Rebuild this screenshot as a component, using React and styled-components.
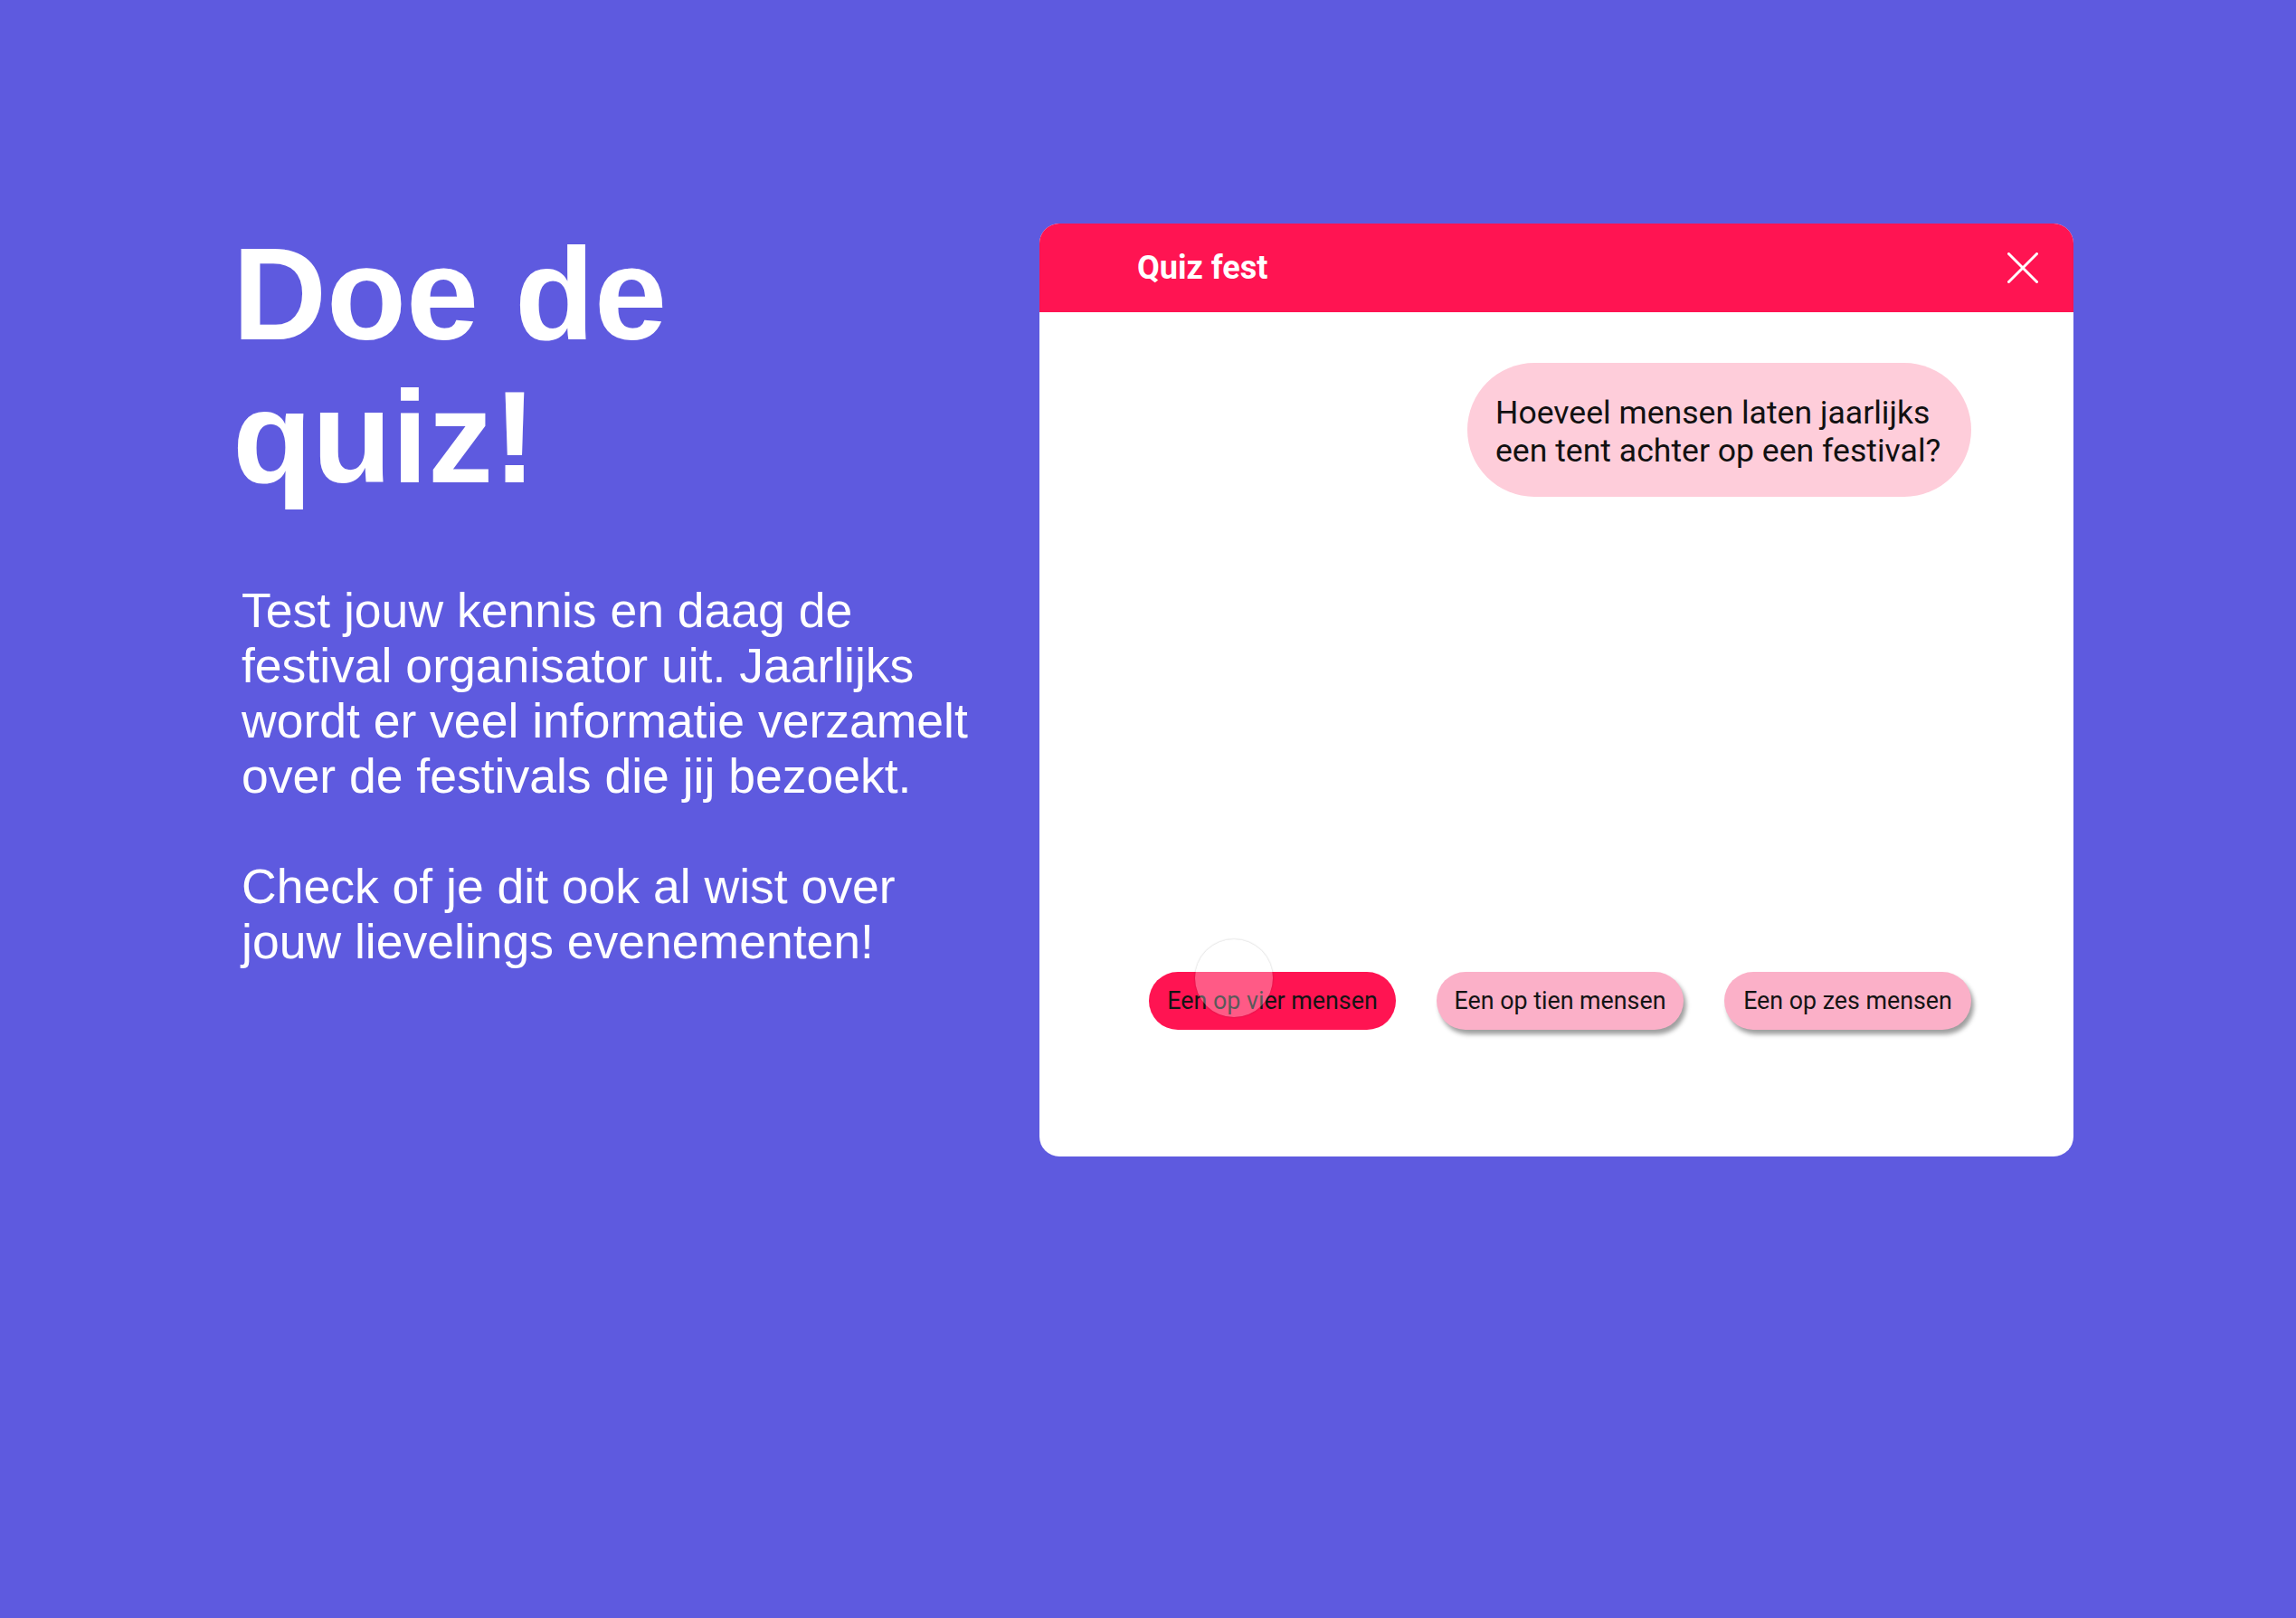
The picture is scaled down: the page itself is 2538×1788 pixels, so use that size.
import React from "react";
import styled, { createGlobalStyle } from "styled-components";

const GlobalStyle = createGlobalStyle`
  html, body {
    margin: 0;
    padding: 0;
    background: #5e5adf;
  }
  body {
    min-height: 1788px;
    font-family: "Liberation Sans", Arial, sans-serif;
  }
`;

const Page = styled.main`
  display: flex;
  align-items: flex-start;
  justify-content: space-between;
  padding: 247px 246px 0 257px;
  min-height: 1788px;
  box-sizing: border-box;
  background: #5e5adf;
`;

const Intro = styled.section`
  width: 830px;
  flex: 0 0 830px;
  color: #ffffff;
`;

const Title = styled.h1`
  margin: 0;
  font-family: "Liberation Sans", Arial, sans-serif;
  font-weight: 700;
  font-size: 144px;
  line-height: 158px;
  color: #ffffff;
`;

const Text = styled.p`
  margin: ${(p) => (p.$first ? "81px" : "61px")} 0 0;
  padding-left: 10px;
  width: 815px;
  font-family: "Liberation Sans", Arial, sans-serif;
  font-size: 53.5px;
  line-height: 61px;
  color: #ffffff;
`;

const Card = styled.section`
  flex: 0 0 1143px;
  width: 1143px;
  height: 1031px;
  background: #ffffff;
  border-radius: 22px;
  overflow: hidden;
  display: flex;
  flex-direction: column;
  font-family: Roboto, "Noto Sans", sans-serif;
`;

const Header = styled.header`
  height: 98px;
  flex: 0 0 98px;
  background: #ff1452;
  display: flex;
  align-items: center;
  justify-content: space-between;
  padding: 0 39px 0 108px;
  box-sizing: border-box;
`;

const HeaderTitle = styled.h2`
  margin: 0;
  font-family: Roboto, sans-serif;
  font-weight: 700;
  font-size: 36px;
  color: #ffffff;
`;

const CloseButton = styled.button`
  width: 34px;
  height: 34px;
  padding: 0;
  border: 0;
  background: transparent;
  display: flex;
  cursor: pointer;
`;

const Body = styled.div`
  flex: 1;
  display: flex;
  flex-direction: column;
  align-items: flex-end;
  padding: 56px 113px 140px 0;
`;

const Bubble = styled.div`
  width: 557px;
  box-sizing: border-box;
  padding: 34px 24px 30px 31px;
  background: #fecdda;
  border-radius: 74px;
  font-family: Roboto, sans-serif;
  font-size: 35.6px;
  line-height: 42px;
  color: #111111;
`;

const Answers = styled.div`
  margin-top: auto;
  display: flex;
  gap: 45px;
`;

const Answer = styled.button`
  position: relative;
  width: 273px;
  height: 64px;
  padding: 0;
  border: 0;
  border-radius: 32px;
  font-family: Roboto, sans-serif;
  font-size: 26.8px;
  color: #141414;
  white-space: nowrap;
  background: ${(p) => (p.$active ? "#ff1452" : "#fbb0c8")};
  box-shadow: ${(p) =>
    p.$active ? "none" : "3px 5px 5px rgba(0, 0, 0, 0.38)"};
  cursor: pointer;
`;

const Ripple = styled.span`
  position: absolute;
  left: 51px;
  top: -36px;
  width: 86px;
  height: 86px;
  border-radius: 50%;
  background: rgba(255, 255, 255, 0.3);
  box-shadow: 0 0 2px rgba(0, 0, 0, 0.25);
  pointer-events: none;
`;

const answers = ["Een op vier mensen", "Een op tien mensen", "Een op zes mensen"];

export default function App() {
  return (
    <>
      <GlobalStyle />
      <Page>
        <Intro>
          <Title>Doe de quiz!</Title>
          <Text $first>
            Test jouw kennis en daag de festival organisator uit. Jaarlijks
            wordt er veel informatie verzamelt over de festivals die jij
            bezoekt.
          </Text>
          <Text>Check of je dit ook al wist over jouw lievelings evenementen!</Text>
        </Intro>
        <Card>
          <Header>
            <HeaderTitle>Quiz fest</HeaderTitle>
            <CloseButton aria-label="Sluiten">
              <svg width="34" height="34" viewBox="0 0 34 34">
                <path
                  d="M1.5 1.5 L32.5 32.5 M32.5 1.5 L1.5 32.5"
                  stroke="#ffffff"
                  strokeWidth="3"
                  strokeLinecap="round"
                  fill="none"
                />
              </svg>
            </CloseButton>
          </Header>
          <Body>
            <Bubble>
              Hoeveel mensen laten jaarlijks een tent achter op een festival?
            </Bubble>
            <Answers>
              {answers.map((a, i) => (
                <Answer key={a} $active={i === 0}>
                  {a}
                  {i === 0 && <Ripple />}
                </Answer>
              ))}
            </Answers>
          </Body>
        </Card>
      </Page>
    </>
  );
}
